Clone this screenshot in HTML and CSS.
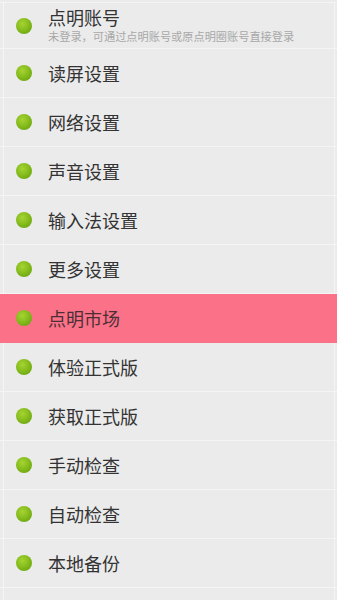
FILE: index.html
```html
<!DOCTYPE html>
<html lang="zh">
<head>
<meta charset="utf-8">
<link rel="stylesheet" href="styles.css">
</head>
<body>
<ul class="list">
  <li class="row row-account">
    <span class="dot"></span>
    <div class="texts">
      <div class="title">点明账号</div>
      <div class="sub">未登录，可通过点明账号或原点明圈账号直接登录</div>
    </div>
  </li>
  <li class="row"><span class="dot"></span><span class="title">读屏设置</span></li>
  <li class="row"><span class="dot"></span><span class="title">网络设置</span></li>
  <li class="row"><span class="dot"></span><span class="title">声音设置</span></li>
  <li class="row"><span class="dot"></span><span class="title">输入法设置</span></li>
  <li class="row"><span class="dot"></span><span class="title">更多设置</span></li>
  <li class="row active"><span class="dot"></span><span class="title">点明市场</span></li>
  <li class="row"><span class="dot"></span><span class="title">体验正式版</span></li>
  <li class="row"><span class="dot"></span><span class="title">获取正式版</span></li>
  <li class="row"><span class="dot"></span><span class="title">手动检查</span></li>
  <li class="row"><span class="dot"></span><span class="title">自动检查</span></li>
  <li class="row"><span class="dot"></span><span class="title">本地备份</span></li>
  <li class="row row-empty"></li>
</ul>
</body>
</html>
```

FILE: styles.css
```css
html, body {
  margin: 0;
  padding: 0;
  height: 100%;
  overflow: hidden;
  background: #ebebeb;
}
body {
  font-family: "Noto Sans CJK SC", "Noto Sans", sans-serif;
}
.list {
  list-style: none;
  margin: 0;
  padding: 0;
  background-color: #ebebeb;
  background-image:
    linear-gradient(to right, transparent 3px, #f5f5f5 3px, #f5f5f5 4px, transparent 4px),
    linear-gradient(to left, transparent 2px, #f5f5f5 2px, #f5f5f5 3px, transparent 3px);
}
.row {
  box-sizing: border-box;
  height: 49px;
  border-bottom: 1px solid #f4f4f4;
  display: flex;
  align-items: center;
  padding-left: 16px;
}
.row-account {
  border-top: 1px solid #f4f4f4;
  margin-top: 2px;
  height: 47px;
}
.dot {
  flex: none;
  width: 16px;
  height: 16px;
  border-radius: 50%;
  background: radial-gradient(circle at 40% 35%, #a6d334 0%, #86bd1c 45%, #5e9a0c 100%);
  margin-right: 16px;
}
.texts {
  align-self: flex-start;
  display: flex;
  flex-direction: column;
  margin-top: 4px;
}
.title {
  font-size: 18px;
  line-height: 20px;
  color: #333333;
}
.sub {
  margin-top: 3px;
  font-size: 11.2px;
  line-height: 13px;
  color: #a8a8a8;
  white-space: nowrap;
}
.row.active {
  background: #fb7188;
  border-bottom-color: #fb7188;
}
.row.active .title {
  color: #4a3035;
}
```
